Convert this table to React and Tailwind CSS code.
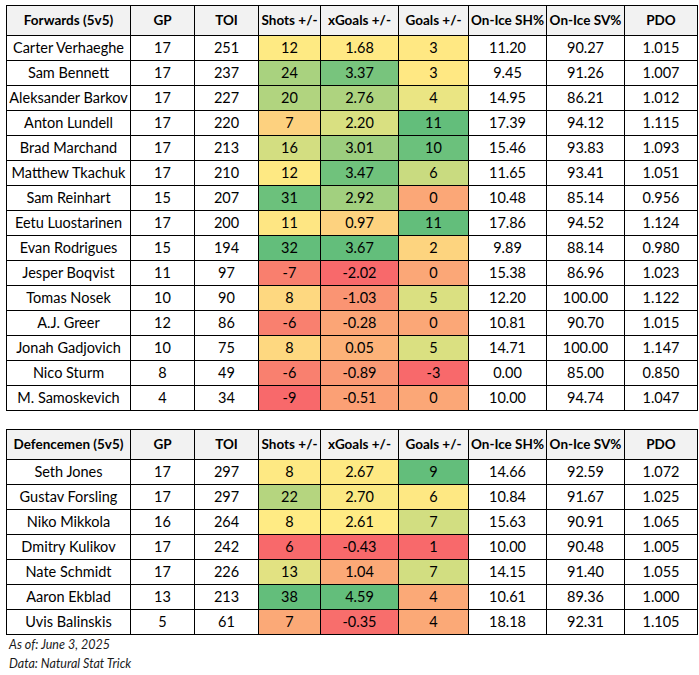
import React from "react";

const forwards = [
  ["Carter Verhaeghe", 17, 251, "12", "#FEEA83", "1.68", "#FFE984", "3", "#FFE883", "11.20", "90.27", "1.015"],
  ["Sam Bennett", 17, 237, "24", "#A9D27F", "3.37", "#78C47D", "3", "#FFE883", "9.45", "91.26", "1.007"],
  ["Aleksander Barkov", 17, 227, "20", "#B1D47F", "2.76", "#AED37F", "4", "#EAE583", "14.95", "86.21", "1.012"],
  ["Anton Lundell", 17, 220, "7", "#FDD17F", "2.20", "#D9E081", "11", "#63BE7B", "17.39", "94.12", "1.115"],
  ["Brad Marchand", 17, 213, "16", "#D3DE81", "3.01", "#9CCE7F", "10", "#6BC17C", "15.46", "93.83", "1.093"],
  ["Matthew Tkachuk", 17, 210, "12", "#FEE983", "3.47", "#70C27C", "6", "#C9DB80", "11.65", "93.41", "1.051"],
  ["Sam Reinhart", 15, 207, "31", "#6CC17C", "2.92", "#A2D07F", "0", "#FBA777", "10.48", "85.14", "0.956"],
  ["Eetu Luostarinen", 17, 200, "11", "#FEE683", "0.97", "#FDD27F", "11", "#63BE7B", "17.86", "94.52", "1.124"],
  ["Evan Rodrigues", 15, 194, "32", "#63BE7B", "3.67", "#63BE7B", "2", "#FDD47F", "9.89", "88.14", "0.980"],
  ["Jesper Boqvist", 11, 97, "-7", "#F97F6E", "-2.02", "#F8696B", "0", "#FBA777", "15.38", "86.96", "1.023"],
  ["Tomas Nosek", 10, 90, "8", "#FED880", "-1.03", "#FA9473", "5", "#DAE081", "12.20", "100.00", "1.122"],
  ["A.J. Greer", 12, 86, "-6", "#F9806F", "-0.28", "#FBA576", "0", "#FBA777", "10.81", "90.70", "1.015"],
  ["Jonah Gadjovich", 10, 75, "8", "#FED880", "0.05", "#FCB279", "5", "#DAE081", "14.71", "100.00", "1.147"],
  ["Nico Sturm", 8, 49, "-6", "#F9806F", "-0.89", "#FA9974", "-3", "#F8696B", "0.00", "85.00", "0.850"],
  ["M. Samoskevich", 4, 34, "-9", "#F8696B", "-0.51", "#FBA075", "0", "#FBA777", "10.00", "94.74", "1.047"],
];

const defence = [
  ["Seth Jones", 17, 297, "8", "#FEE983", "2.67", "#FEE983", "9", "#63BE7B", "14.66", "92.59", "1.072"],
  ["Gustav Forsling", 17, 297, "22", "#B5D57F", "2.70", "#FBE983", "6", "#FEE883", "10.84", "91.67", "1.025"],
  ["Niko Mikkola", 16, 264, "8", "#FFEB84", "2.61", "#FFEB84", "7", "#D2DE81", "15.63", "90.91", "1.065"],
  ["Dmitry Kulikov", 17, 242, "6", "#F8696B", "-0.43", "#F8696B", "1", "#F8696B", "10.00", "90.48", "1.005"],
  ["Nate Schmidt", 17, 226, "13", "#E2E282", "1.04", "#FBA977", "7", "#D2DE81", "14.15", "91.40", "1.055"],
  ["Aaron Ekblad", 13, 213, "38", "#63BE7B", "4.59", "#63BE7B", "4", "#FBA977", "10.61", "89.36", "1.000"],
  ["Uvis Balinskis", 5, 61, "7", "#FBA977", "-0.35", "#F86E6C", "4", "#FBA977", "18.18", "92.31", "1.105"],
];

const widths = [124, 64, 64, 62, 78, 70, 78, 78, 73];

function StatTable({ title, rows }) {
  const heads = [title, "GP", "TOI", "Shots +/-", "xGoals +/-", "Goals +/-", "On-Ice SH%", "On-Ice SV%", "PDO"];
  return (
    <table className="table-fixed border-collapse w-[691px] text-[14.5px] text-black">
      <colgroup>
        {widths.map((w, i) => (
          <col key={i} style={{ width: w }} />
        ))}
      </colgroup>
      <thead>
        <tr className="h-[30px] bg-[#f2f2f2]">
          {heads.map((h) => (
            <th key={h} className="border border-black font-bold text-[13.5px] text-center p-0 whitespace-nowrap">
              {h}
            </th>
          ))}
        </tr>
      </thead>
      <tbody>
        {rows.map((r) => (
          <tr key={r[0]} className="h-[25px]">
            <td className="border border-black text-center p-0 whitespace-nowrap">{r[0]}</td>
            <td className="border border-black text-center p-0">{r[1]}</td>
            <td className="border border-black text-center p-0">{r[2]}</td>
            <td className="border border-black text-center p-0" style={{ background: r[4] }}>{r[3]}</td>
            <td className="border border-black text-center p-0" style={{ background: r[6] }}>{r[5]}</td>
            <td className="border border-black text-center p-0" style={{ background: r[8] }}>{r[7]}</td>
            <td className="border border-black text-center p-0">{r[9]}</td>
            <td className="border border-black text-center p-0">{r[10]}</td>
            <td className="border border-black text-center p-0">{r[11]}</td>
          </tr>
        ))}
      </tbody>
    </table>
  );
}

export default function App() {
  return (
    <div className="w-[699px] h-[675px] bg-white font-['Lato',sans-serif] pt-[5px] pl-[6px]">
      <StatTable title="Forwards (5v5)" rows={forwards} />
      <div className="mt-[18px]">
        <StatTable title="Defencemen (5v5)" rows={defence} />
      </div>
      <div className="pl-[3px] text-[12.5px] italic text-[#1a1a1a] leading-[19px]">
        <p>As of: June 3, 2025</p>
        <p>Data: Natural Stat Trick</p>
      </div>
    </div>
  );
}
